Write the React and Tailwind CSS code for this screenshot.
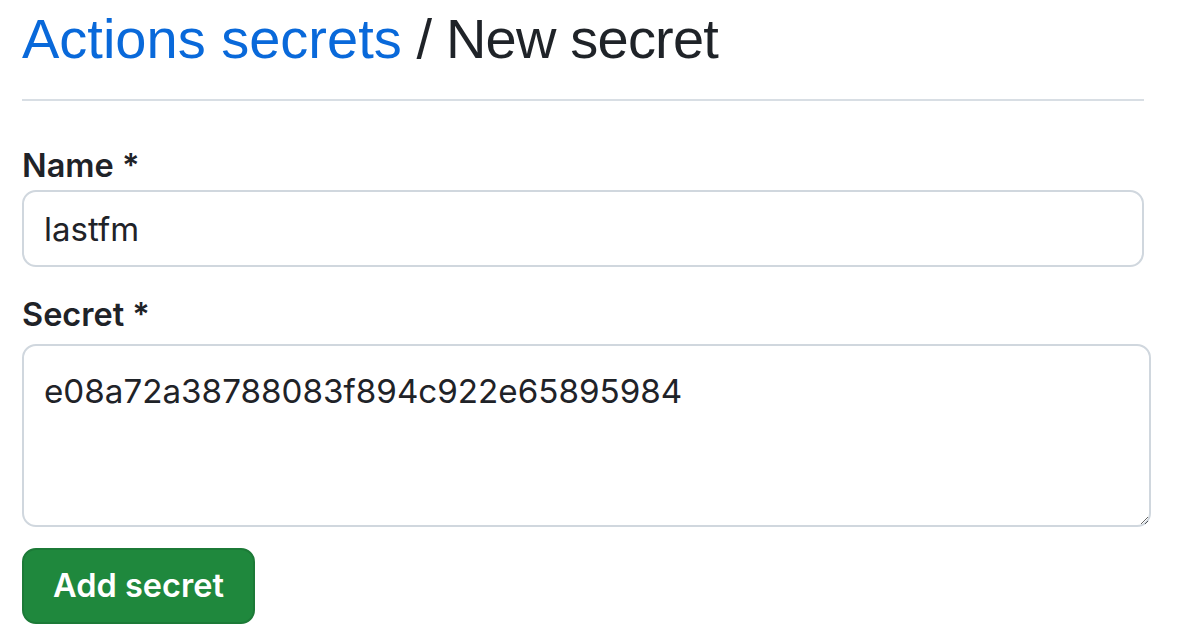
import React from "react";

const App = () => {
  return (
    <div className="w-[1182px] h-[643px] bg-white px-[22px] font-['Inter',sans-serif] text-[#1f2328] overflow-hidden">
      <div className="w-[1122px] border-b-2 border-[#d8dee4] pt-[4px] pb-[25px]">
        <h2 className="text-[56px] leading-[70px] font-normal font-['Liberation_Sans',sans-serif]">
          <a href="#" className="text-[#0969da]">Actions secrets</a>
          <span className="tracking-[-0.8px]"> / New secret</span>
        </h2>
      </div>

      <form className="pt-[45px]">
        <label className="block text-[32.5px] leading-[40px] font-semibold mb-[4px]">Name *</label>
        <input
          type="text"
          defaultValue="lastfm"
          className="block w-[1122px] h-[77px] px-[20px] text-[33px] border-2 border-[#d0d7de] rounded-[14px] outline-none"
        />

        <label className="block text-[32.5px] leading-[40px] font-semibold mt-[28px] mb-[9px]">Secret *</label>
        <textarea
          defaultValue="e08a72a38788083f894c922e65895984"
          className="block w-[1129px] h-[183px] px-[20px] pt-[25px] text-[33.2px] leading-[40px] border-2 border-[#d0d7de] rounded-[14px] outline-none resize-y"
        />

        <button
          type="button"
          className="mt-[21px] h-[76px] w-[233px] bg-[#1f883d] text-white text-[32.5px] font-semibold rounded-[14px] border-2 border-[#1c7a37]"
        >
          Add secret
        </button>
      </form>
    </div>
  );
};

export default App;
